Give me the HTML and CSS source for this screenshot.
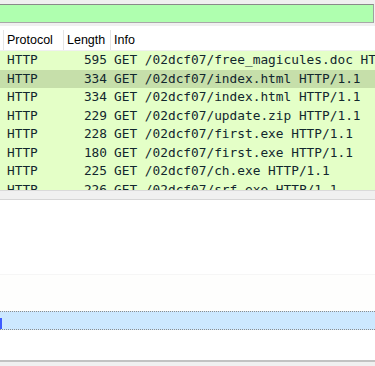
FILE: index.html
```html
<!DOCTYPE html>
<html>
<head>
    <title>Packet List</title>
    <link rel="stylesheet" href="styles.css">
</head>
<body>
    <div class="filter-row">
        <div class="filter-field"></div>
    </div>

    <div class="packet-list">
        <div class="list-header">
            <div class="col prev"></div>
            <div class="col proto">Protocol</div>
            <div class="col len">Length</div>
            <div class="col info">Info</div>
        </div>
        <div class="rows">
            <div class="row"><span class="proto">HTTP</span><span class="len">595</span><span class="info">GET /02dcf07/free_magicules.doc HTTP/1.1</span></div>
            <div class="row selected"><span class="proto">HTTP</span><span class="len">334</span><span class="info">GET /02dcf07/index.html HTTP/1.1</span></div>
            <div class="row"><span class="proto">HTTP</span><span class="len">334</span><span class="info">GET /02dcf07/index.html HTTP/1.1</span></div>
            <div class="row"><span class="proto">HTTP</span><span class="len">229</span><span class="info">GET /02dcf07/update.zip HTTP/1.1</span></div>
            <div class="row"><span class="proto">HTTP</span><span class="len">228</span><span class="info">GET /02dcf07/first.exe HTTP/1.1</span></div>
            <div class="row"><span class="proto">HTTP</span><span class="len">180</span><span class="info">GET /02dcf07/first.exe HTTP/1.1</span></div>
            <div class="row"><span class="proto">HTTP</span><span class="len">225</span><span class="info">GET /02dcf07/ch.exe HTTP/1.1</span></div>
            <div class="row"><span class="proto">HTTP</span><span class="len">226</span><span class="info">GET /02dcf07/srf.exe HTTP/1.1</span></div>
        </div>
    </div>

    <div class="splitter"></div>

    <div class="details">
        <div class="tree-space"></div>
        <div class="tree-faint"></div>
        <div class="tree-line selected"><span class="mark"></span></div>
    </div>

    <div class="status-bar"></div>
</body>
</html>
```

FILE: styles.css
```css
body {
    margin: 0;
    width: 375px;
    height: 366px;
    overflow: hidden;
    background-color: #f0f0f0;
    font-family: "Liberation Sans", Arial, sans-serif;
}
.filter-row {
    height: 26px;
    padding-top: 4px;
    box-sizing: border-box;
}
.filter-field {
    height: 17px;
    margin-right: 1px;
    background-color: #afffaf;
    border-top: 1px solid #8a8a8a;
    border-bottom: 1px solid #a8a8a8;
    border-right: 1px solid #a0a0a0;
}
.packet-list {
    height: 164px;
    overflow: hidden;
    background-color: #ffffff;
}
.list-header {
    display: grid;
    grid-template-columns: 4px 60px 47px 1fr;
    height: 25px;
    padding-top: 4px;
    box-sizing: border-box;
    font-size: 12.5px;
    color: #000;
    border-bottom: 1px solid #f0f0f0;
}
.list-header .col {
    line-height: 20px;
    border-right: 1px solid #e5e5e5;
    padding-left: 3px;
    white-space: nowrap;
}
.list-header .prev {
    padding-left: 0;
}
.list-header .info {
    border-right: none;
}
.row {
    display: grid;
    grid-template-columns: 4px 60px 47px 1fr;
    height: 18.5px;
    line-height: 18.5px;
    background-color: #e4ffc7;
    color: #12272e;
    font-family: "DejaVu Sans Mono", monospace;
    font-size: 12.8px;
    white-space: nowrap;
    overflow: hidden;
}
.row.selected {
    background-color: #c6dfaa;
}
.row .proto {
    grid-column: 2;
    padding-left: 3px;
}
.row .len {
    grid-column: 3;
    text-align: right;
    padding-right: 4px;
}
.row .info {
    grid-column: 4;
    padding-left: 3px;
}
.splitter {
    height: 8px;
    border-top: 1px solid #dadada;
    border-bottom: 1px solid #d6d6d6;
    background-color: #f0f0f0;
}
.details {
    height: 160px;
    background-color: #ffffff;
    border-bottom: 2px solid #c2c2c2;
}
.tree-space {
    height: 74px;
}
.tree-faint {
    height: 36px;
    border-top: 1px solid #f6f6f6;
    background-color: #fefefd;
}
.tree-line {
    height: 17px;
    position: relative;
}
.tree-line.selected {
    background-color: #cce8ff;
    border-top: 1px dotted #8c8c8c;
    border-bottom: 1px dotted #8c8c8c;
}
.mark {
    position: absolute;
    left: 0;
    top: 6px;
    width: 2px;
    height: 11px;
    background-color: #3d5cff;
}
.status-bar {
    height: 5px;
}
```
